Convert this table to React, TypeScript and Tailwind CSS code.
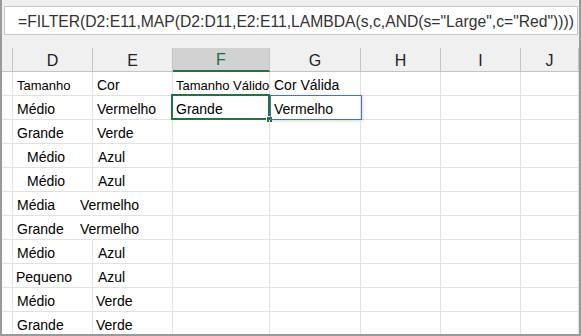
import React from 'react';

type Row = {
  d: string;
  e: string;
  dPad?: string;
  ePad?: string;
  spill?: boolean;
};

const rows: Row[] = [
  { d: 'Tamanho', e: 'Cor' },
  { d: 'Médio', e: 'Vermelho' },
  { d: 'Grande', e: 'Verde' },
  { d: 'Médio', e: 'Azul', dPad: 'pl-[14px]', ePad: 'pl-[5px]' },
  { d: 'Médio', e: 'Azul', dPad: 'pl-[14px]', ePad: 'pl-[5px]' },
  { d: 'Média', e: 'Vermelho', spill: true },
  { d: 'Grande', e: 'Vermelho', spill: true },
  { d: 'Médio', e: 'Azul', ePad: 'pl-[5px]' },
  { d: 'Pequeno', e: 'Azul', dPad: 'pl-[3px]', ePad: 'pl-[5px]' },
  { d: 'Médio', e: 'Verde', ePad: 'pl-[3px]' },
  { d: 'Grande', e: 'Verde', ePad: 'pl-[3px]' },
];

const columns = ['D', 'E', 'F', 'G', 'H', 'I', 'J'];

const gridCols = 'grid grid-cols-[11px_80px_80px_97px_91px_80px_80px_1fr]';
const cell =
  'h-[24px] border-r border-b border-[#e1e1e1] flex items-end pb-[3px] leading-none text-black whitespace-nowrap';

function HeaderRow() {
  return (
    <div className={`${gridCols} bg-[#f0f0f0]`}>
      <div className="h-[24px] border-r border-b border-[#c4c4c4]" />
      {columns.map((c) =>
        c === 'F' ? (
          <div
            key={c}
            className="h-[24px] bg-[#d2d2d2] border-r border-[#c4c4c4] border-b-2 border-b-[#217346] flex items-center justify-center pt-[2px] text-[16px] text-[#1e6b41]"
          >
            {c}
          </div>
        ) : (
          <div
            key={c}
            className="h-[24px] border-r border-b border-[#c4c4c4] flex items-center justify-center pt-[2px] text-[16px] text-[#222]"
          >
            {c}
          </div>
        ),
      )}
    </div>
  );
}

export default function App() {
  return (
    <div
      className="w-[581px] h-[336px] overflow-hidden bg-[#f0f0f0] border-l-2 border-r-2 border-b-2 border-[#9a9a9a] flex flex-col"
      style={{ fontFamily: '"Liberation Sans", Arial, sans-serif' }}
    >
      <div className="shrink-0 mt-[6px] ml-[2px] mr-[1px] h-[29px] bg-white border border-[#c6c6c6] flex items-center pl-[13px] pt-[2px] text-[15.7px] text-[#333] whitespace-nowrap">
        =FILTER(D2:E11,MAP(D2:D11,E2:E11,LAMBDA(s,c,AND(s="Large",c="Red"))))
      </div>

      <div className="shrink-0 mt-[13px]">
        <HeaderRow />
      </div>

      <div className="shrink-0 bg-white text-[14px]">
        {rows.map((r, i) => (
          <div key={i} className={gridCols}>
            <div className={cell} />
            <div className={`${cell} ${r.dPad ?? 'pl-[4px]'} ${r.spill ? 'border-r-white' : ''}`}>
              {i === 0 ? <span className="text-[13px]">{r.d}</span> : r.d}
            </div>
            <div className={`${cell} ${r.ePad ?? 'pl-[4px]'}`}>
              {r.spill ? <span className="-ml-[17px]">{r.e}</span> : r.e}
            </div>
            <div className={`${cell} pl-[3px] relative`}>
              {i === 0 && <span className="text-[13px]">Tamanho Válido</span>}
              {i === 1 && (
                <>
                  Grande
                  <div className="absolute left-[-2px] top-[-2px] w-[99px] h-[26px] border-2 border-[#217346]" />
                  <div className="absolute left-[93px] top-[20px] w-[7px] h-[7px] bg-[#217346] border border-white" />
                </>
              )}
            </div>
            <div className={`${cell} pl-[4px] relative`}>
              {i === 0 && 'Cor Válida'}
              {i === 1 && (
                <>
                  Vermelho
                  <div className="absolute left-0 top-[-1px] w-[92px] h-[25px] border border-[#4472c4] shadow-[1px_1px_3px_rgba(0,0,0,0.15)]" />
                </>
              )}
            </div>
            <div className={cell} />
            <div className={cell} />
            <div className={cell} />
          </div>
        ))}
      </div>
    </div>
  );
}
